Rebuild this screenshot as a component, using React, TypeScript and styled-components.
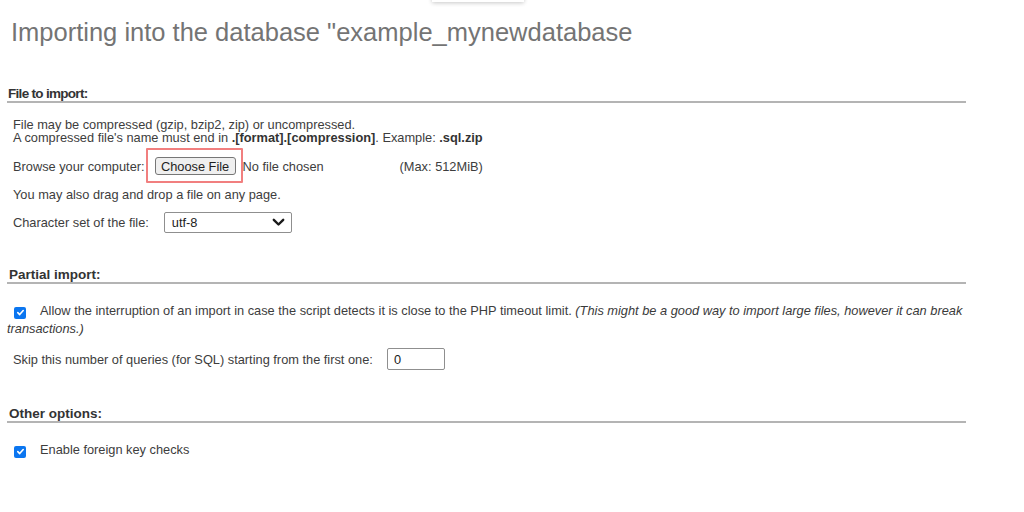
import React from "react";
import styled, { createGlobalStyle } from "styled-components";

const GlobalStyle = createGlobalStyle`
  html, body {
    margin: 0;
    padding: 0;
    background: #ffffff;
  }
  body {
    font-family: "Liberation Sans", Arial, sans-serif;
    color: #3d3d3d;
  }
`;

const Page = styled.div`
  position: relative;
  width: 1024px;
  height: 512px;
  box-sizing: border-box;
  padding: 16px 58px 0 7px;
  overflow: hidden;
`;

const TopShade = styled.div`
  position: absolute;
  top: -6px;
  left: 432px;
  width: 92px;
  height: 8px;
  background: #ffffff;
  box-shadow: 0 1px 4px rgba(0, 0, 0, 0.22);
`;

const Title = styled.h1`
  margin: 0;
  padding-left: 4px;
  font-size: 25.5px;
  line-height: 32px;
  font-weight: normal;
  color: #747474;
`;

const Section = styled.section<{ $top: number }>`
  margin-top: ${({ $top }) => $top}px;
`;

const Legend = styled.div<{ $narrow?: boolean }>`
  padding-left: ${({ $narrow }) => ($narrow ? 1 : 2)}px;
  font-size: 13.5px;
  line-height: 14px;
  font-weight: bold;
  letter-spacing: ${({ $narrow }) => ($narrow ? "-0.7px" : "0")};
  color: #333;
  border-bottom: 2px solid #b4b4b4;
`;

const Body = styled.div<{ $top: number; $indent?: number }>`
  padding-top: ${({ $top }) => $top}px;
  padding-left: ${({ $indent = 6 }) => $indent}px;
  font-size: 12.8px;
`;

const Notes = styled.div`
  line-height: 13px;
  margin-bottom: 8px;

  b {
    color: #333;
  }
`;

const Row = styled.div<{ $top?: number; $indent?: number }>`
  display: flex;
  align-items: center;
  height: 28px;
  margin-top: ${({ $top = 0 }) => $top}px;
  padding-left: ${({ $indent = 0 }) => $indent}px;
  white-space: nowrap;
`;

const Label = styled.span<{ $gap: number }>`
  margin-right: ${({ $gap }) => $gap}px;
`;

const Highlight = styled.span`
  position: relative;
  display: inline-flex;

  &::after {
    content: "";
    position: absolute;
    top: -9px;
    left: -9px;
    right: -7px;
    bottom: -8px;
    border: 2px solid #f17f7f;
    border-radius: 1px;
    pointer-events: none;
  }
`;

const FileButton = styled.button`
  box-sizing: border-box;
  width: 81px;
  height: 18px;
  padding: 0;
  font-family: "Liberation Sans", Arial, sans-serif;
  font-size: 12.8px;
  color: #1e1e1e;
  background: #efefef;
  border: 1px solid #767676;
  border-radius: 3px;
`;

const NoFile = styled.span`
  margin-left: 7px;
  width: 157px;
`;

const SelectBox = styled.div`
  box-sizing: border-box;
  display: flex;
  align-items: center;
  justify-content: space-between;
  width: 128px;
  height: 21px;
  padding: 0 6px 0 7px;
  border: 1px solid #8f8f8f;
  border-radius: 2px;
  color: #222;
`;

const NumberBox = styled.div`
  box-sizing: border-box;
  display: flex;
  align-items: center;
  width: 58px;
  height: 22px;
  padding-left: 6px;
  border: 1px solid #8f8f8f;
  border-radius: 2px;
  color: #222;
`;

const CheckPara = styled.div`
  line-height: 18px;

  i {
    color: #3a3a3a;
  }
`;

const Check = styled.span`
  display: inline-flex;
  vertical-align: -2px;
  align-items: center;
  justify-content: center;
  box-sizing: border-box;
  width: 12px;
  height: 12px;
  margin: 0 14px 0 7px;
  background: #0b76f0;
  border-radius: 2px;
`;

const Tick = () => (
  <Check>
    <svg width="9" height="9" viewBox="0 0 10 10">
      <path d="M2 5.2 L4.1 7.3 L8 2.8" fill="none" stroke="#fff" strokeWidth="1.8" strokeLinecap="round" strokeLinejoin="round" />
    </svg>
  </Check>
);

const Chevron = () => (
  <svg width="13" height="9" viewBox="0 0 13 9">
    <path d="M1.8 1.8 L6.5 6.5 L11.2 1.8" fill="none" stroke="#1a1a1a" strokeWidth="2.4" strokeLinecap="round" strokeLinejoin="round" />
  </svg>
);

export default function App() {
  return (
    <>
      <GlobalStyle />
      <Page>
        <TopShade />
        <Title>Importing into the database "example_mynewdatabase</Title>

        <Section $top={39}>
          <Legend $narrow>File to import:</Legend>
          <Body $top={15}>
            <Notes>
              File may be compressed (gzip, bzip2, zip) or uncompressed.
              <br />
              A compressed file's name must end in <b>.[format].[compression]</b>. Example: <b>.sql.zip</b>
            </Notes>
            <Row>
              <Label $gap={10}>Browse your computer:</Label>
              <Highlight>
                <FileButton type="button">Choose File</FileButton>
              </Highlight>
              <NoFile>No file chosen</NoFile>
              <span>(Max: 512MiB)</span>
            </Row>
            <Row>You may also drag and drop a file on any page.</Row>
            <Row>
              <Label $gap={15}>Character set of the file:</Label>
              <SelectBox>
                <span>utf-8</span>
                <Chevron />
              </SelectBox>
            </Row>
          </Body>
        </Section>

        <Section $top={32}>
          <Legend>Partial import:</Legend>
          <Body $top={18} $indent={0}>
            <CheckPara>
              <Tick />
              Allow the interruption of an import in case the script detects it is close to the PHP timeout limit.{" "}
              <i>(This might be a good way to import large files, however it can break transactions.)</i>
            </CheckPara>
            <Row $top={7} $indent={6}>
              <Label $gap={14}>Skip this number of queries (for SQL) starting from the first one:</Label>
              <NumberBox>0</NumberBox>
            </Row>
          </Body>
        </Section>

        <Section $top={34}>
          <Legend>Other options:</Legend>
          <Body $top={18} $indent={0}>
            <CheckPara>
              <Tick />
              Enable foreign key checks
            </CheckPara>
          </Body>
        </Section>
      </Page>
    </>
  );
}
